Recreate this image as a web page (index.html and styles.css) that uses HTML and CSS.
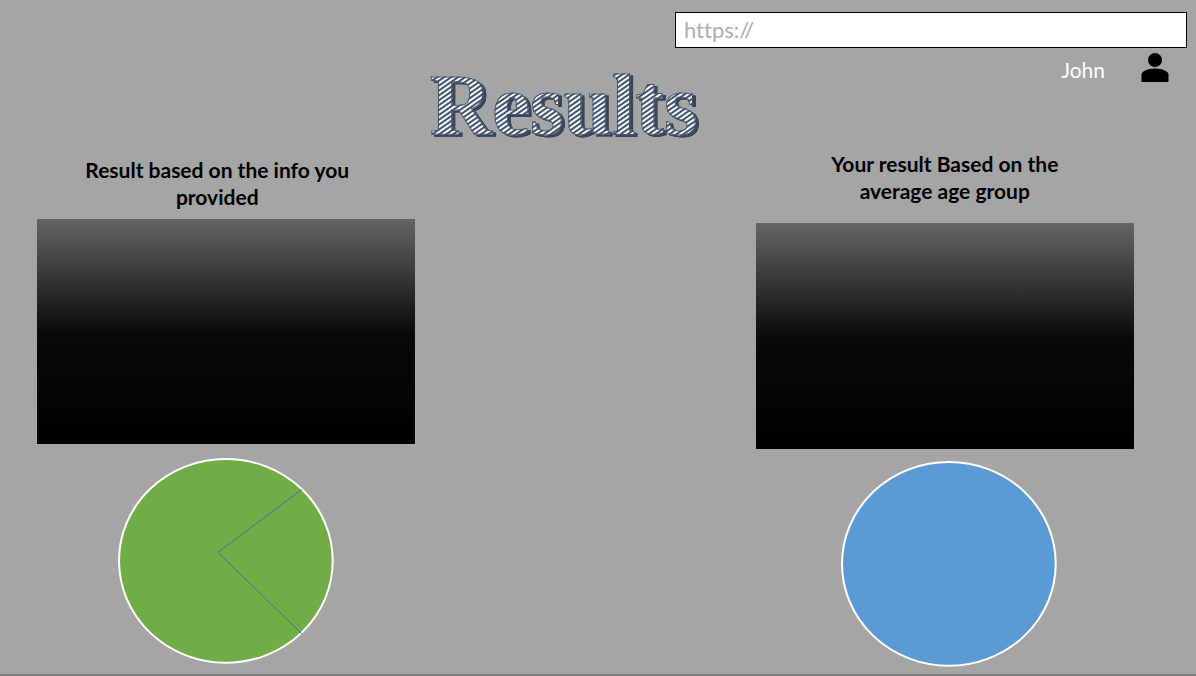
FILE: index.html
```html
<!DOCTYPE html>
<html lang="en">
<head>
<meta charset="utf-8">
<meta name="viewport" content="width=device-width, initial-scale=1">
<title>Results</title>
<link rel="stylesheet" href="styles.css">
</head>
<body>
<div class="page">
  <header class="top">
    <input class="address" type="url" placeholder="https://" aria-label="Address">
    <div class="banner">
      <h1 class="title">Results</h1>
      <div class="user">
        <span class="user-name">John</span>
        <svg class="user-icon" viewBox="0 0 28 30" aria-hidden="true">
          <circle cx="14" cy="7" r="7"/>
          <path d="M.5 29V21.500C.5 18.500 6.500 15.500 14 15.500S27.500 18.500 27.500 21.500V29Z"/>
        </svg>
      </div>
    </div>
  </header>
  <main class="results">
    <section class="result result-own">
      <h2 class="heading">Result based on the info you provided</h2>
      <div class="panel"></div>
      <svg class="pie" viewBox="0 0 216 206" role="img" aria-label="Your result chart">
        <ellipse class="disc green" cx="108" cy="103" rx="107" ry="102"/>
        <path class="slice" d="M184 31.500 100 94.500 184 176"/>
      </svg>
    </section>
    <section class="result result-group">
      <h2 class="heading">Your result Based on the average age group</h2>
      <div class="panel"></div>
      <svg class="pie" viewBox="0 0 216 206" role="img" aria-label="Age group chart">
        <ellipse class="disc blue" cx="108" cy="103" rx="107" ry="102"/>
      </svg>
    </section>
  </main>
</div>
</body>
</html>
```
FILE: styles.css
```css
* {
  box-sizing: border-box;
}

body {
  margin: 0;
  background: #a5a5a5;
  color: #000;
  font-family: Lato, "Open Sans", sans-serif;
  font-variant-ligatures: none;
}

.page {
  min-height: 100vh;
  border-bottom: 2px solid #7f7b7b;
}

.top {
  display: flex;
  flex-direction: column;
  padding-top: 12px;
}

.address {
  align-self: flex-end;
  width: 43%;
  max-width: 512px;
  height: 36px;
  margin-right: 9px;
  padding: 0 8px 2px;
  border: 1px solid #000;
  border-radius: 0;
  background: #fff;
  font: 22px/32px Lato, "Open Sans", sans-serif;
  font-variant-ligatures: none;
}

.address::placeholder {
  color: #afabab;
  opacity: 1;
}

.banner {
  display: grid;
  grid-template-columns: 36% auto 1fr;
  padding-right: 27px;
}

.title {
  grid-column: 2;
  margin: 14px 0 0 9px;
  font: bold 86px/86px "Liberation Serif", serif;
  color: transparent;
  background: repeating-linear-gradient(145deg, #44546a 0 1px, #f4f9ff 2px 3px, #44546a 4px);
  -webkit-background-clip: text;
  background-clip: text;
  -webkit-text-stroke: 1px #44546a;
  filter: drop-shadow(3px 2px 0 #38455a);
}

.user {
  grid-column: 3;
  display: flex;
  justify-content: flex-end;
  align-items: flex-start;
  gap: 36px;
  padding-top: 5px;
}

.user-name {
  padding-top: 3px;
  color: #fff;
  font-size: 21px;
  line-height: 27px;
}

.user-icon {
  width: 28px;
  height: 30px;
}

.results {
  display: grid;
  grid-template-columns: 1fr 1fr;
  column-gap: 31%;
  padding: 0 62px 6px 37px;
}

.result {
  display: flex;
  flex-direction: column;
  align-items: center;
}

.result-own {
  padding-top: 8px;
}

.result-group {
  padding-top: 2px;
}

.heading {
  width: 280px;
  margin: 0;
  font-size: 21px;
  line-height: 27px;
  text-align: center;
}

.result-own .heading {
  margin: 0 18px 9px 0;
}

.result-group .heading {
  margin-bottom: 19px;
}

.panel {
  width: 100%;
  aspect-ratio: 5 / 3;
  max-height: 225px;
  margin-bottom: 14px;
  background: linear-gradient(#656565, #090909 51%, #000);
}

.result-group .panel {
  max-height: 226px;
  margin-bottom: 12px;
}

.pie {
  width: 57%;
}

.result-group .pie {
  margin-left: 8px;
}

.disc {
  stroke: #fff;
  stroke-width: 2;
}

.green {
  fill: #70ad47;
}

.blue {
  fill: #5b9bd5;
}

.slice {
  fill: none;
  stroke: #41719c;
}
```
